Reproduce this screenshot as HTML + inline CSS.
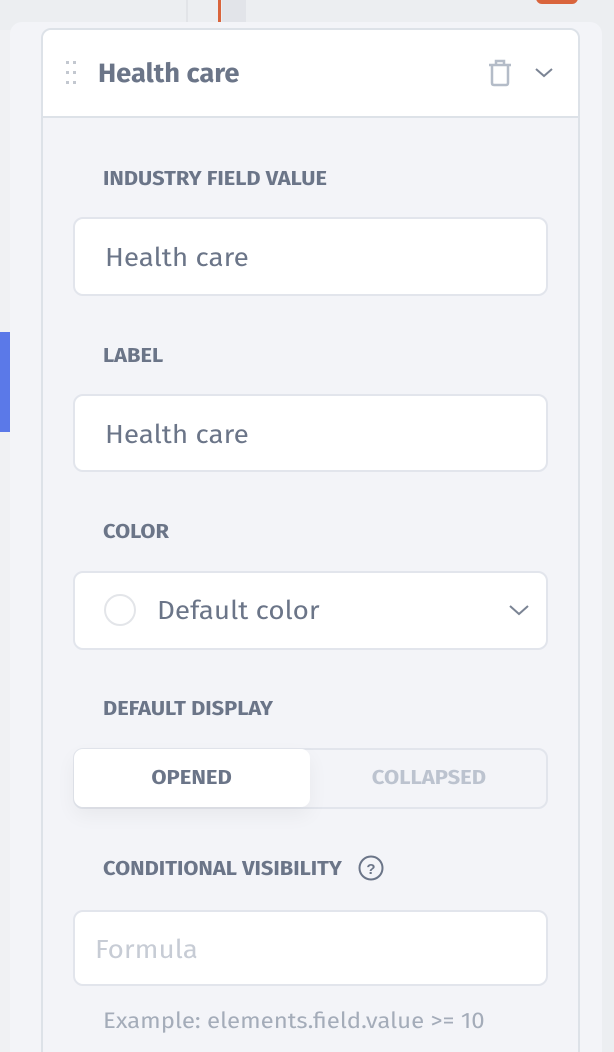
<!DOCTYPE html>
<html><head><meta charset="utf-8"><style>
*{box-sizing:border-box;margin:0;padding:0}
html,body{width:614px;height:1052px;overflow:hidden}
body{background:#eceef1;font-family:"Fira Sans","Liberation Sans",sans-serif;position:relative}
.a{position:absolute}
.lbl{position:absolute;left:103px;font-size:20px;font-weight:bold;color:#6b7588;transform:scaleX(1.09);transform-origin:left center;white-space:nowrap}
.inp{position:absolute;left:73px;width:475px;background:#fff;border:2px solid #e2e5ec;border-radius:10px}
.txt{position:absolute;font-size:26px;color:#6b7588;transform:scaleX(1.07);transform-origin:left center;white-space:nowrap}
</style></head><body>
<div class="a" style="left:186px;top:0;width:2px;height:22px;background:#e2e4e8"></div>
<div class="a" style="left:218px;top:0;width:3px;height:22px;background:#d9643c"></div>
<div class="a" style="left:222px;top:0;width:24px;height:22px;background:#e2e4e9"></div>
<div class="a" style="left:536px;top:-10px;width:42px;height:14px;border-radius:6px;background:#d9643c"></div>
<div class="a" style="left:0;top:30px;width:12px;height:1022px;background:#f0f1f3"></div>
<div class="a" style="left:0;top:332px;width:12px;height:100px;background:#5b79e8"></div>
<div class="a" style="left:10px;top:22px;width:592px;height:1060px;background:#f3f4f8;border-radius:12px"></div>
<div class="a" style="left:41px;top:28px;width:539px;height:1060px;background:#f3f4f8;border:2px solid #dde2e8;border-radius:10px"></div>
<div class="a" style="left:43px;top:30px;width:535px;height:88px;background:#fff;border-bottom:2px solid #dde2e8;border-radius:8px 8px 0 0"></div>
<svg class="a" style="left:64px;top:60px" width="14" height="26"><g fill="#c3c8d0"><rect x="2" y="1" width="3" height="3"/><rect x="9" y="1" width="3" height="3"/><rect x="2" y="11" width="3" height="3"/><rect x="9" y="11" width="3" height="3"/><rect x="2" y="21" width="3" height="3"/><rect x="9" y="21" width="3" height="3"/></g></svg>
<div class="a" style="left:98px;top:58px;font-size:26px;font-weight:bold;color:#6b7588;transform:scaleX(1.05);transform-origin:left center;white-space:nowrap">Health care</div>
<svg class="a" style="left:486px;top:58px" width="28" height="30"><g fill="none" stroke="#b4bcc8" stroke-width="2.5"><path d="M3 7H25M10 7V3H18V7"/><path d="M6 8V25Q6 27 8 27H20Q22 27 22 25V8"/></g></svg>
<svg class="a" style="left:534px;top:66px" width="20" height="14"><path d="M2 3L10 10L18 3" fill="none" stroke="#7b8494" stroke-width="2"/></svg>

<div class="lbl" style="top:167px">INDUSTRY FIELD VALUE</div>
<div class="inp" style="top:217px;height:79px"></div>
<div class="txt" style="left:105px;top:242px">Health care</div>

<div class="lbl" style="top:344px">LABEL</div>
<div class="inp" style="top:394px;height:78px"></div>
<div class="txt" style="left:105px;top:419px">Health care</div>

<div class="lbl" style="top:520px">COLOR</div>
<div class="inp" style="top:571px;height:79px"></div>
<div class="a" style="left:104px;top:594px;width:32px;height:32px;border:2px solid #e3e5e9;border-radius:50%"></div>
<div class="txt" style="left:157px;top:595px">Default color</div>
<svg class="a" style="left:508px;top:603px" width="22" height="14"><path d="M2 3L11 11L20 3" fill="none" stroke="#7b8494" stroke-width="2"/></svg>

<div class="lbl" style="top:697px">DEFAULT DISPLAY</div>
<div class="a" style="left:73px;top:748px;width:475px;height:61px;border:2px solid #e2e5ec;border-radius:10px;background:#f3f4f8"></div>
<div class="a" style="left:74px;top:749px;width:236px;height:58px;background:#fff;border-radius:9px;box-shadow:0 8px 20px rgba(0,0,0,.05)"></div>
<div class="a" style="left:74px;top:766px;width:236px;text-align:center;font-size:20px;font-weight:bold;color:#6b7588"><span style="display:inline-block;transform:scaleX(1.1)">OPENED</span></div>
<div class="a" style="left:310px;top:766px;width:237px;text-align:center;font-size:20px;font-weight:bold;color:#bcc3cf"><span style="display:inline-block;transform:scaleX(1.1)">COLLAPSED</span></div>

<div class="lbl" style="top:857px">CONDITIONAL VISIBILITY</div>
<svg class="a" style="left:358px;top:855px" width="28" height="28"><circle cx="13" cy="13" r="11.5" fill="none" stroke="#6b7588" stroke-width="2"/><text x="13" y="19" text-anchor="middle" font-family="Liberation Sans" font-weight="bold" font-size="15" fill="#6b7588">?</text></svg>
<div class="inp" style="top:910px;height:76px"></div>
<div class="txt" style="left:95px;top:934px;color:#c7ccd5">Formula</div>
<div class="a" style="left:103px;top:1007px;font-size:22px;color:#a4acb9;transform:scaleX(1.09);transform-origin:left center;white-space:nowrap">Example: elements.field.value &gt;= 10</div>
</body></html>
